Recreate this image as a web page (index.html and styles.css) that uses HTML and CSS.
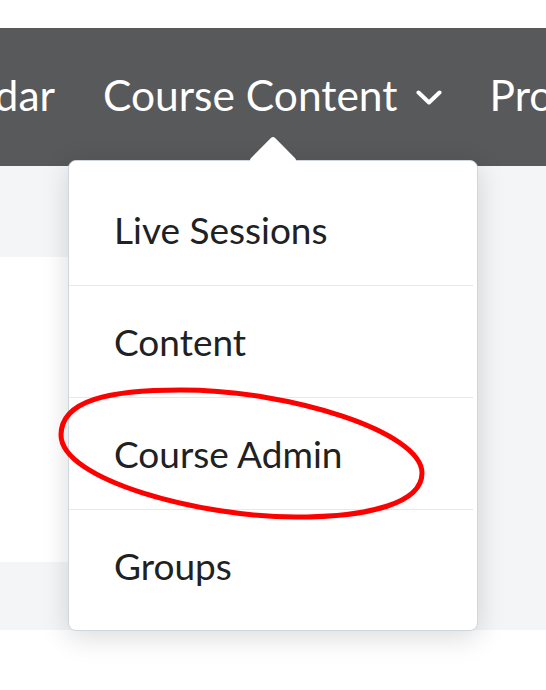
FILE: index.html
```html
<!DOCTYPE html>
<html lang="en">
  <head>
    <meta charset="UTF-8" />
    <meta name="viewport" content="width=device-width, initial-scale=1.0" />
    <title>Course Content</title>
    <link rel="stylesheet" href="styles.css">
  </head>
  <body>
    <div class="top-strip"></div>

    <nav class="navbar">
      <div class="nav-track">
        <div class="nav-item nav-item-cut"><span>Calendar</span></div>

        <div class="nav-item has-menu">
          <span>Course Content</span>
          <svg class="chevron" width="26" height="15" viewBox="0 0 26 15">
            <polyline points="2.5,2.5 13,12.5 23.5,2.5" />
          </svg>

          <div class="dropdown">
            <ul class="menu-list">
              <li>Live Sessions</li>
              <li>Content</li>
              <li>Course Admin</li>
              <li>Groups</li>
            </ul>
          </div>
        </div>

        <div class="nav-item"><span>Progress</span></div>
      </div>
    </nav>

    <main class="page-body">
      <div class="card"></div>
    </main>

    <!-- red pen mark round the admin entry -->
    <svg class="pen-mark" width="546" height="690" viewBox="0 0 546 690">
      <path d="M61,435 C61,400 110,390 181,390 C290,390 422,432 422,473 C422,503 370,517 296,517 C200,517 61,480 61,435 Z" />
    </svg>
  </body>
</html>
```

FILE: styles.css
```css
html,
body {
  margin: 0;
  overflow: hidden;
}
body {
  font-family: Lato, "Open Sans", sans-serif;
  background: #fff;
  position: relative;
  height: 690px;
}
.top-strip {
  height: 28px;
}

/* dark top navigation */
.navbar {
  background-color: #58595b;
  height: 138px;
  color: #fff;
}
.nav-track {
  display: flex;
  align-items: center;
  gap: 48px;
  height: 132px;
  font-size: 42.5px;
  white-space: nowrap;
}
.nav-item {
  display: flex;
  align-items: center;
  gap: 18px;
}
.nav-item-cut {
  width: 55px;
  justify-content: flex-end;
}
.has-menu {
  position: relative;
  height: 100%;
}
.chevron {
  flex: none;
  margin-top: 6px;
}
.chevron polyline {
  fill: none;
  stroke: #fff;
  stroke-width: 4;
  stroke-linecap: round;
  stroke-linejoin: round;
}

/* dropdown menu */
.dropdown {
  position: absolute;
  top: 132px;
  left: -35px;
  width: 408px;
  background: #fff;
  border: 1px solid #d0d6de;
  border-radius: 8px;
  box-shadow: 0 6px 28px rgba(0, 0, 0, 0.15);
  padding: 13px 0 9px;
  z-index: 5;
}
.dropdown::before {
  content: "";
  position: absolute;
  top: -18px;
  left: 187px;
  width: 34px;
  height: 34px;
  background: #fff;
  border-radius: 3px;
  transform: rotate(45deg);
}
.menu-list {
  list-style: none;
  margin: 0 4px 0 0;
  padding: 0;
  position: relative;
}
.menu-list li {
  height: 111px;
  display: flex;
  align-items: center;
  padding-left: 45px;
  font-size: 37px;
  color: #202122;
}
.menu-list li + li {
  border-top: 1px solid #e3e9f0;
}

/* content area under the bar */
.page-body {
  background: #f4f5f7;
  height: 373px;
  padding-top: 91px;
}
.card {
  background: #fff;
  width: 320px;
  height: 305px;
}

.pen-mark {
  position: absolute;
  top: 0;
  left: 0;
  pointer-events: none;
  z-index: 10;
}
.pen-mark path {
  fill: none;
  stroke: #f00;
  stroke-width: 5;
}
```
